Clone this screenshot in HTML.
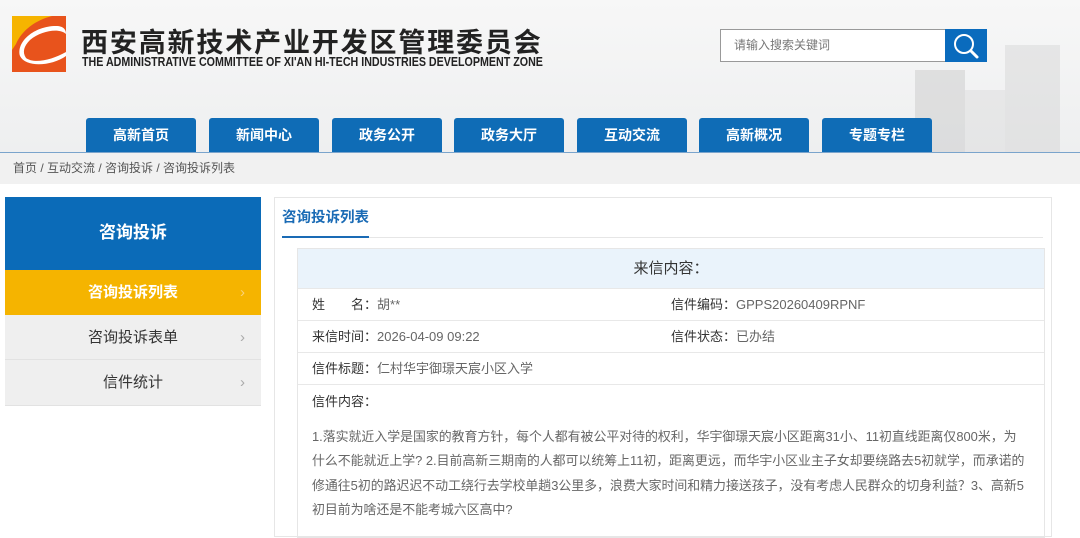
<!DOCTYPE html>
<html><head><meta charset="utf-8"><style>
*{margin:0;padding:0;box-sizing:border-box}
body{width:1080px;height:526px;overflow:hidden;background:#fff;font-family:"Liberation Sans","Noto Sans CJK SC",sans-serif;position:relative}
.hdr{position:absolute;left:0;top:0;width:1080px;height:152px;background:linear-gradient(#f7f7f7,#eeeff0)}
.abs{position:absolute}
.tab{position:absolute;top:118px;height:34px;width:110px;background:#0f6cb6;color:#fff;font-size:14px;font-weight:bold;text-align:center;line-height:34px;border-radius:3px 3px 0 0}
.crumb{position:absolute;left:0;top:152px;width:1080px;height:32px;background:#f1f1f1;border-top:1px solid #7aa4cc;font-size:12px;color:#555;line-height:31px;padding-left:13px}
.side{position:absolute;left:5px;width:256px;text-align:center;font-size:15px}
.row{position:absolute;left:298px;width:746px;border-bottom:1px solid #e8e8e8;font-size:13px;color:#333}
.lab{position:absolute;left:14px}
.val{color:#666}
</style></head><body>
<div class="hdr"></div>
<svg class="abs" style="left:12px;top:16px" width="54" height="56" viewBox="0 0 54 56">
<rect width="54" height="56" fill="#e8531c"/>
<path d="M0 0H40C24 4 10 14 4 28L0 34Z" fill="#f6b400"/>
<path d="M8 40C4 26 22 10 44 10C52 10 54 14 54 18C48 12 30 14 18 24C12 30 10 36 14 42C22 48 40 44 54 36V40C40 50 14 52 8 40Z" fill="#fff"/>
</svg>
<div class="abs" style="left:81px;top:21px;font-size:27px;font-weight:bold;color:#222;letter-spacing:1.85px;white-space:nowrap">西安高新技术产业开发区管理委员会</div>
<div class="abs" style="left:82px;top:55px;font-size:12.5px;font-weight:bold;color:#222;white-space:nowrap;transform:scaleX(0.855);transform-origin:0 0">THE ADMINISTRATIVE COMMITTEE OF XI'AN HI-TECH INDUSTRIES DEVELOPMENT ZONE</div>
<div class="abs" style="left:720px;top:29px;width:226px;height:33px;background:#fff;border:1px solid #999;font-size:12px;color:#777;line-height:31px;padding-left:13px">请输入搜索关键词</div>
<div class="abs" style="left:945px;top:29px;width:42px;height:33px;background:#0a6bbd"></div>
<svg class="abs" style="left:952px;top:32px" width="28" height="28"><circle cx="12" cy="12" r="9" fill="none" stroke="#fff" stroke-width="2"/><path d="M19 19L25 25" stroke="#fff" stroke-width="3" stroke-linecap="round"/></svg>
<svg class="abs" style="left:905px;top:20px" width="175" height="132" opacity="0.35"><rect x="10" y="50" width="50" height="82" fill="#bbb"/><rect x="100" y="25" width="55" height="107" fill="#ccc"/><rect x="60" y="70" width="40" height="62" fill="#d5d5d5"/></svg>
<div class="tab" style="left:86px">高新首页</div>
<div class="tab" style="left:209px">新闻中心</div>
<div class="tab" style="left:332px">政务公开</div>
<div class="tab" style="left:454px">政务大厅</div>
<div class="tab" style="left:577px">互动交流</div>
<div class="tab" style="left:699px">高新概况</div>
<div class="tab" style="left:822px">专题专栏</div>
<div class="crumb">首页 / 互动交流 / 咨询投诉 / 咨询投诉列表</div>

<div class="side" style="top:197px;height:73px;background:#0b6bb8;color:#fff;font-size:17px;font-weight:bold;line-height:72px">咨询投诉</div>
<div class="side" style="top:270px;height:45px;background:#f5b400;color:#fff;font-weight:bold;line-height:45px">咨询投诉列表<span class="abs" style="right:16px;color:#f9d27a;font-weight:normal">›</span></div>
<div class="side" style="top:315px;height:45px;background:#efefef;color:#333;line-height:45px;border-bottom:1px solid #e2e2e2">咨询投诉表单<span class="abs" style="right:16px;color:#aaa">›</span></div>
<div class="side" style="top:360px;height:46px;background:#efefef;color:#333;line-height:45px;border-bottom:1px solid #e2e2e2">信件统计<span class="abs" style="right:16px;color:#aaa">›</span></div>

<div class="abs" style="left:274px;top:197px;width:778px;height:340px;border:1px solid #e6e6e6"></div>
<div class="abs" style="left:282px;top:206px;font-size:14.5px;font-weight:bold;color:#1a6bb5">咨询投诉列表</div>
<div class="abs" style="left:282px;top:237px;width:761px;height:1px;background:#e6e6e6"></div>
<div class="abs" style="left:282px;top:236px;width:87px;height:2px;background:#1a6bb5"></div>

<div class="abs" style="left:297px;top:248px;width:748px;height:290px;border:1px solid #e6e6e6"></div>
<div class="row" style="top:249px;height:40px;background:#eaf3fb;text-align:center;line-height:39px;font-size:15px">来信内容：</div>
<div class="row" style="top:289px;height:32px;line-height:31px"><span class="lab">姓&emsp;&emsp;名：<span class="val">胡**</span></span><span class="abs" style="left:373px">信件编码：<span class="val">GPPS20260409RPNF</span></span></div>
<div class="row" style="top:321px;height:32px;line-height:31px"><span class="lab">来信时间：<span class="val">2026-04-09 09:22</span></span><span class="abs" style="left:373px">信件状态：<span class="val">已办结</span></span></div>
<div class="row" style="top:353px;height:32px;line-height:31px"><span class="lab">信件标题：<span class="val">仁村华宇御璟天宸小区入学</span></span></div>
<div class="row" style="top:385px;height:141px;border:none"><span class="lab" style="top:6px">信件内容：</span>
<div class="abs val" style="left:14px;top:40px;white-space:nowrap;line-height:24.3px;font-size:12.9px">1.落实就近入学是国家的教育方针，每个人都有被公平对待的权利，华宇御璟天宸小区距离31小、11初直线距离仅800米，为<br>什么不能就近上学? 2.目前高新三期南的人都可以统筹上11初，距离更远，而华宇小区业主子女却要绕路去5初就学，而承诺的<br>修通往5初的路迟迟不动工绕行去学校单趟3公里多，浪费大家时间和精力接送孩子，没有考虑人民群众的切身利益？3、高新5<br>初目前为啥还是不能考城六区高中?</div></div>
</body></html>
